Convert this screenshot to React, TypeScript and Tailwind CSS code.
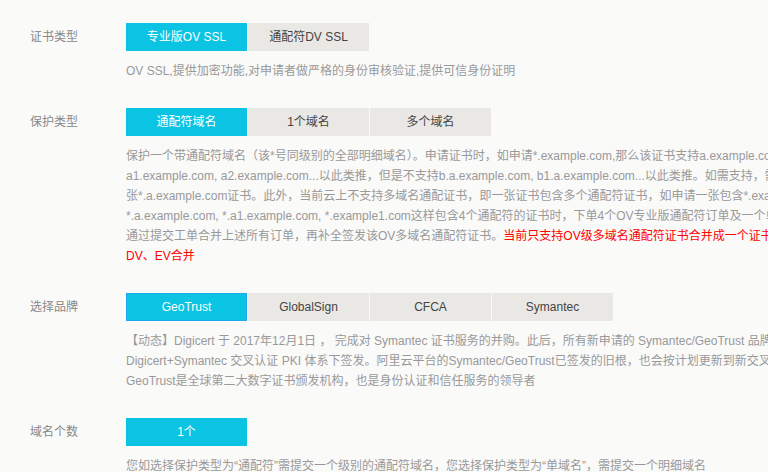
import React from 'react'

type Opt = { label: string; active?: boolean; bordered?: boolean }

const font = { fontFamily: '"Liberation Sans", Arial, "Noto Sans CJK SC", sans-serif' }

function OptionGroup({ options }: { options: Opt[] }) {
  return (
    <div className="flex gap-px">
      {options.map((o) => (
        <button
          key={o.label}
          className={
            o.active
              ? `w-[121px] h-[28px] text-[12px] text-white bg-[#0bc3e3] ${o.bordered ? 'border border-[#20a8ee]' : ''}`
              : 'w-[121px] h-[28px] text-[12px] text-[#444] bg-[#eae8e5]'
          }
        >
          {o.label}
        </button>
      ))}
    </div>
  )
}

function Row({ label, options, children }: { label: string; options: Opt[]; children: React.ReactNode }) {
  return (
    <div className="flex mb-[27px]">
      <div className="w-[96px] shrink-0 h-[28px] flex items-center text-[12px] text-[#888]">{label}</div>
      <div className="flex flex-col">
        <OptionGroup options={options} />
        <div className="mt-[10px] text-[12px] leading-[20px] text-[#999] whitespace-nowrap">{children}</div>
      </div>
    </div>
  )
}

export default function App() {
  return (
    <div className="h-screen overflow-hidden bg-[#fafaf9] pt-[23px] pl-[30px]" style={font}>
      <Row label="证书类型" options={[{ label: '专业版OV SSL', active: true }, { label: '通配符DV SSL' }]}>
        OV SSL,提供加密功能,对申请者做严格的身份审核验证,提供可信身份证明
      </Row>

      <Row label="保护类型" options={[{ label: '通配符域名', active: true }, { label: '1个域名' }, { label: '多个域名' }]}>
        <div>保护一个带通配符域名（该*号同级别的全部明细域名）。申请证书时，如申请*.example.com,那么该证书支持a.example.com,</div>
        <div>a1.example.com, a2.example.com...以此类推，但是不支持b.a.example.com, b1.a.example.com...以此类推。如需支持，需要再申请一</div>
        <div>张*.a.example.com证书。此外，当前云上不支持多域名通配证书，即一张证书包含多个通配符证书，如申请一张包含*.example.com,</div>
        <div>*.a.example.com, *.a1.example.com, *.example1.com这样包含4个通配符的证书时，下单4个OV专业版通配符订单及一个单域名订单，然后</div>
        <div>
          通过提交工单合并上述所有订单，再补全签发该OV多域名通配符证书。
          <span className="text-[#ff0000]">当前只支持OV级多域名通配符证书合并成一个证书，不支持</span>
        </div>
        <div className="text-[#ff0000]">DV、EV合并</div>
      </Row>

      <Row
        label="选择品牌"
        options={[
          { label: 'GeoTrust', active: true, bordered: true },
          { label: 'GlobalSign' },
          { label: 'CFCA' },
          { label: 'Symantec' },
        ]}
      >
        <div>【动态】Digicert 于 2017年12月1日 ， 完成对 Symantec 证书服务的并购。此后，所有新申请的 Symantec/GeoTrust 品牌证书都将在新的</div>
        <div>Digicert+Symantec 交叉认证 PKI 体系下签发。阿里云平台的Symantec/GeoTrust已签发的旧根，也会按计划更新到新交叉认证体系。</div>
        <div>GeoTrust是全球第二大数字证书颁发机构，也是身份认证和信任服务的领导者</div>
      </Row>

      <Row label="域名个数" options={[{ label: '1个', active: true }]}>
        您如选择保护类型为“通配符”需提交一个级别的通配符域名，您选择保护类型为“单域名”，需提交一个明细域名
      </Row>
    </div>
  )
}
